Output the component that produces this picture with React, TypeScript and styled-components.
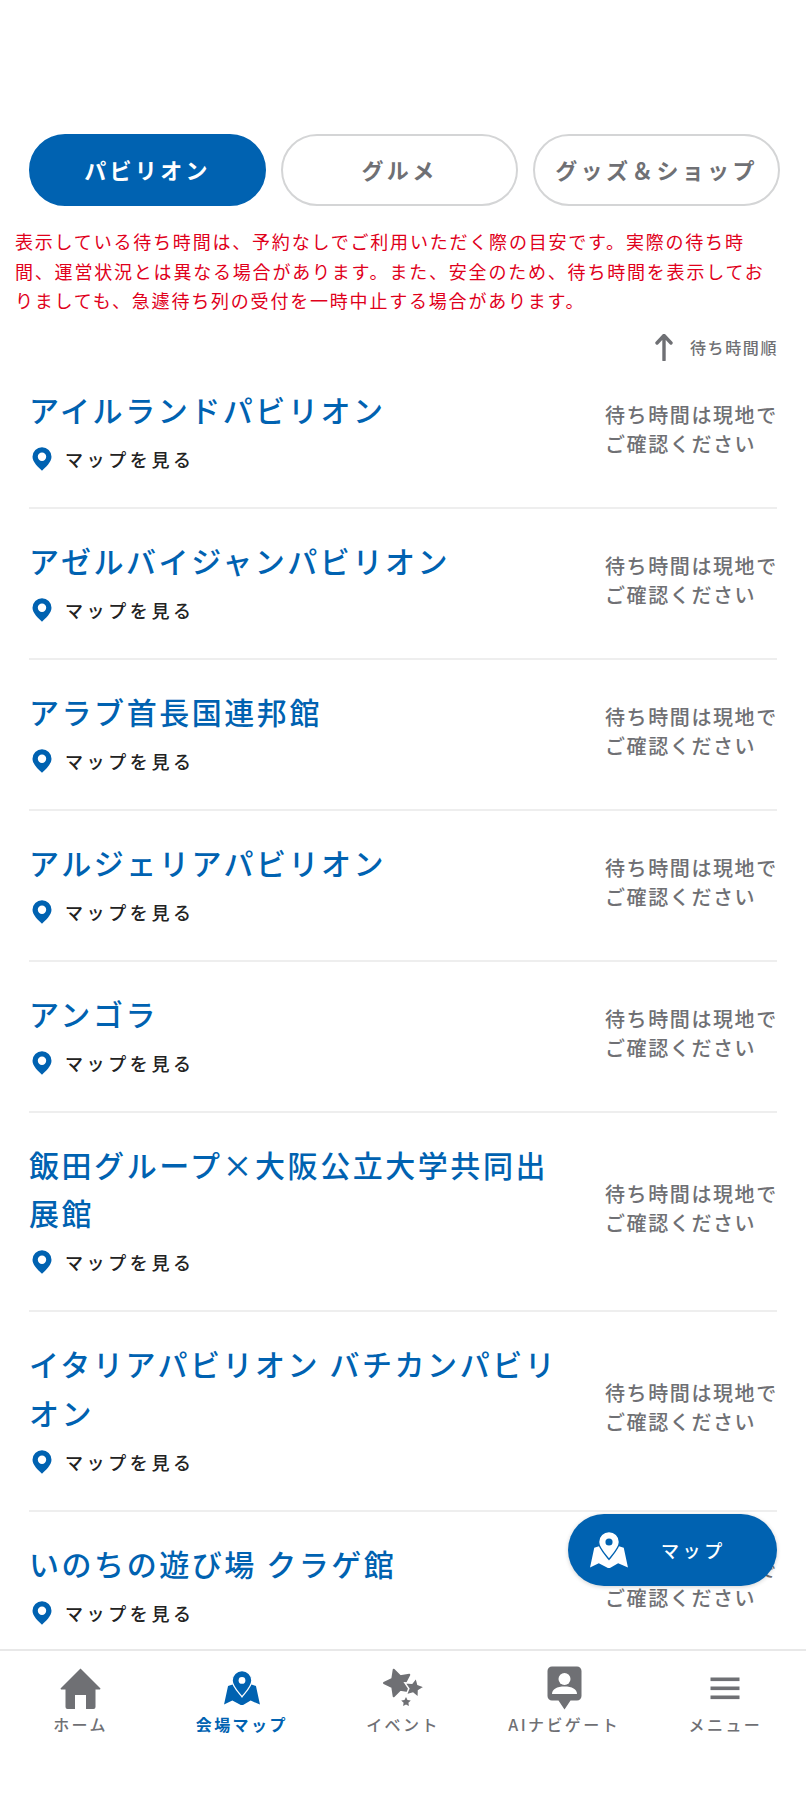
import React from 'react';
import styled, { createGlobalStyle } from 'styled-components';

const BLUE = '#0062b1';
const GRAY = '#6f7074';

const Global = createGlobalStyle`
    html, body {
        margin: 0;
        padding: 0;
        background: #ffffff;
    }
    * {
        box-sizing: border-box;
    }
    body {
        font-family: "Noto Sans CJK JP", "Noto Sans", sans-serif;
    }
`;

const Screen = styled.div`
    position: relative;
    width: 806px;
    height: 1795px;
    display: flex;
    flex-direction: column;
    overflow: hidden;
    background: #ffffff;
`;

const Content = styled.main`
    flex: 1;
    min-height: 0;
    overflow: hidden;
    padding-top: 134px;
`;

const Tabs = styled.div`
    display: flex;
    gap: 15px;
    padding: 0 26px 0 29px;
`;

const Tab = styled.div<{ $active?: boolean; $wide?: boolean }>`
    flex: ${(p) => (p.$wide ? '0 0 247px' : '0 0 237px')};
    height: 72px;
    padding-bottom: 3px;
    display: flex;
    align-items: center;
    justify-content: center;
    border-radius: 36px;
    border: 2px solid ${(p) => (p.$active ? BLUE : '#d4d5d6')};
    background: ${(p) => (p.$active ? BLUE : '#ffffff')};
    color: ${(p) => (p.$active ? '#ffffff' : GRAY)};
    font-size: 22px;
    font-weight: 700;
    letter-spacing: 0.15em;
    white-space: nowrap;
`;

const Notice = styled.p`
    margin: 21px 0 0;
    padding: 0 35px 0 15px;
    color: #e0001b;
    font-size: 18px;
    line-height: 29.5px;
    letter-spacing: 0.1em;
`;

const SortRow = styled.div`
    height: 23px;
    margin-top: 20px;
    margin-bottom: -1px;
    padding-right: 28px;
    display: flex;
    align-items: center;
    justify-content: flex-end;
    gap: 17px;
    color: ${GRAY};
    font-size: 16px;
    font-weight: 500;
    letter-spacing: 0.1em;
`;

const List = styled.ul`
    list-style: none;
    margin: 0;
    padding: 0 29px;
`;

const Row = styled.li`
    display: flex;
    align-items: center;
    justify-content: space-between;
    padding: 27px 0 34px;
    border-bottom: 2px solid #eeeeee;
`;

const RowMain = styled.div`
    width: 535px;
`;

const Title = styled.h2`
    margin: 0;
    color: ${BLUE};
    font-size: 30px;
    font-weight: 500;
    line-height: 48.5px;
    letter-spacing: 0.085em;
`;

const MapLink = styled.a`
    display: flex;
    align-items: center;
    gap: 13px;
    height: 30px;
    margin-top: 10.5px;
    margin-bottom: -1px;
    padding-left: 3px;
    color: #222222;
    font-size: 18px;
    font-weight: 500;
    letter-spacing: 0.2em;
`;

const WaitNote = styled.div`
    width: 172px;
    flex: none;
    color: ${GRAY};
    font-size: 20px;
    font-weight: 500;
    line-height: 29px;
    letter-spacing: 0.08em;
    white-space: nowrap;
`;

const Fab = styled.button`
    position: absolute;
    left: 568px;
    top: 1514px;
    width: 209px;
    height: 72px;
    display: flex;
    align-items: center;
    gap: 33px;
    padding: 0 0 0 22px;
    border: none;
    border-radius: 36px;
    background: ${BLUE};
    color: #ffffff;
    font-family: inherit;
    font-size: 18px;
    font-weight: 500;
    letter-spacing: 0.2em;
    box-shadow: 0 1px 4px rgba(0, 0, 0, 0.18);
`;

const Nav = styled.nav`
    flex: none;
    height: 146px;
    display: grid;
    grid-template-columns: repeat(5, 1fr);
    border-top: 2px solid #e8e8e8;
    background: #ffffff;
`;

const NavItem = styled.div<{ $active?: boolean }>`
    display: flex;
    flex-direction: column;
    align-items: center;
    color: ${(p) => (p.$active ? BLUE : GRAY)};
    font-size: 16px;
    font-weight: ${(p) => (p.$active ? 700 : 500)};
    letter-spacing: 0.15em;
`;

const NavIcon = styled.div`
    height: 46px;
    margin-top: 14px;
    display: flex;
    align-items: center;
    justify-content: center;
`;

const NavLabel = styled.span`
    margin-top: 1px;
    line-height: 24px;
    white-space: nowrap;
`;

const PinIcon = () => (
    <svg width="20" height="24" viewBox="0 0 20 24">
        <path
            fill={BLUE}
            fillRule="evenodd"
            d="M10 0.3a9.5 9.5 0 0 1 9.5 9.5c0 5.4-5.8 10.4-9.500 14C6.300 20.200 0.500 15.200 0.500 9.800A9.500 9.500 0 0 1 10 0.300zM10 5.600a4.200 4.200 0 1 0 0 8.400a4.200 4.200 0 0 0 0-8.400z"
        />
    </svg>
);

const ArrowUp = () => (
    <svg width="18" height="27" viewBox="0 0 18 27">
        <path d="M9 1.5L9 26M2 9L9 1.5L16 9" fill="none" stroke={GRAY} strokeWidth="3.4" strokeLinecap="round" strokeLinejoin="round" />
    </svg>
);

const HomeIcon = () => (
    <svg width="41" height="41" viewBox="0 0 41 41">
        <path
            fill={GRAY}
            d="M20.5 0.5L40.5 20.5L40 21.5H35.5V39a2 2 0 0 1-2 2H26V27H15V41H7.5a2 2 0 0 1-2-2V21.5H1L0.5 20.5z"
        />
    </svg>
);

const MapIcon = ({ color, inner, size }: { color: string; inner: string; size: number }) => (
    <svg width={size} height={size * 0.97} viewBox="0 0 36 35">
        <path
            fill={color}
            d="M4 15L10 13L18 24L26 13L32 15L36 33.7L26.7 29.7L18 34.7L8.3 29.7L0 33.7z"
        />
        <path
            fill={color}
            stroke={inner}
            strokeWidth="1.3"
            d="M18 -0.4a9.9 9.9 0 0 1 9.9 9.9c0 5.5-6.1 11.6-9.9 16.4c-3.8-4.8-9.9-10.900-9.9-16.4A9.9 9.9 0 0 1 18 -0.4z"
        />
        <circle cx="18" cy="9.5" r="3.4" fill={inner} />
    </svg>
);

const star = (cx: number, cy: number, r: number, rot: number) => {
    const pts: string[] = [];
    for (let i = 0; i < 10; i++) {
        const rad = i % 2 === 0 ? r : r * 0.5;
        const a = ((rot + i * 36 - 90) * Math.PI) / 180;
        pts.push(`${(cx + rad * Math.cos(a)).toFixed(1)},${(cy + rad * Math.sin(a)).toFixed(1)}`);
    }
    return pts.join(' ');
};

const StarsIcon = () => (
    <svg width="42" height="40" viewBox="0 0 42 40">
        <polygon fill={GRAY} stroke={GRAY} strokeWidth="2" strokeLinejoin="round" points={star(16, 15, 14, -18)} />
        <polygon fill={GRAY} stroke="#ffffff" strokeWidth="1.5" points={star(32, 20, 10.5, 12)} />
        <polygon fill={GRAY} points={star(24, 34, 5, 0)} />
    </svg>
);

const GuideIcon = () => (
    <svg width="35" height="44" viewBox="0 0 35 44">
        <path
            fill={GRAY}
            d="M5 0.5H30a4.5 4.5 0 0 1 4.5 4.5V30a4.5 4.5 0 0 1-4.5 4.5H23.5L17.5 43.5L11.5 34.5H5A4.5 4.5 0 0 1 0.5 30V5A4.5 4.5 0 0 1 5 0.5z"
        />
        <circle cx="17.5" cy="13" r="6" fill="#ffffff" />
        <path fill="#ffffff" d="M5 28c0-5 5-7.500 12.500-7.500S30 23 30 28z" />
    </svg>
);

const MenuIcon = () => (
    <svg width="30" height="23" viewBox="0 0 30 23">
        <rect x="0.5" y="0.5" width="29" height="3.6" fill={GRAY} />
        <rect x="0.5" y="9.500" width="29" height="3.6" fill={GRAY} />
        <rect x="0.5" y="18.5" width="29" height="3.6" fill={GRAY} />
    </svg>
);

const pavilions = [
    'アイルランドパビリオン',
    'アゼルバイジャンパビリオン',
    'アラブ首長国連邦館',
    'アルジェリアパビリオン',
    'アンゴラ',
    '飯田グループ×大阪公立大学共同出展館',
    'イタリアパビリオン バチカンパビリオン',
    'いのちの遊び場 クラゲ館',
];

const App: React.FC = () => {
    return (
        <Screen>
            <Global />
            <Content>
                <Tabs>
                    <Tab $active>パビリオン</Tab>
                    <Tab>グルメ</Tab>
                    <Tab $wide>グッズ＆ショップ</Tab>
                </Tabs>
                <Notice>
                    表示している待ち時間は、予約なしでご利用いただく際の目安です。実際の待ち時間、運営状況とは異なる場合があります。また、安全のため、待ち時間を表示しておりましても、急遽待ち列の受付を一時中止する場合があります。
                </Notice>
                <SortRow>
                    <ArrowUp />
                    <span>待ち時間順</span>
                </SortRow>
                <List>
                    {pavilions.map((name) => (
                        <Row key={name}>
                            <RowMain>
                                <Title>{name}</Title>
                                <MapLink>
                                    <PinIcon />
                                    マップを見る
                                </MapLink>
                            </RowMain>
                            <WaitNote>
                                待ち時間は現地で
                                <br />
                                ご確認ください
                            </WaitNote>
                        </Row>
                    ))}
                </List>
            </Content>
            <Fab>
                <MapIcon color="#ffffff" inner={BLUE} size={38} />
                マップ
            </Fab>
            <Nav>
                <NavItem>
                    <NavIcon><HomeIcon /></NavIcon>
                    <NavLabel>ホーム</NavLabel>
                </NavItem>
                <NavItem $active>
                    <NavIcon><MapIcon color={BLUE} inner="#ffffff" size={36} /></NavIcon>
                    <NavLabel>会場マップ</NavLabel>
                </NavItem>
                <NavItem>
                    <NavIcon><StarsIcon /></NavIcon>
                    <NavLabel>イベント</NavLabel>
                </NavItem>
                <NavItem>
                    <NavIcon><GuideIcon /></NavIcon>
                    <NavLabel>AIナビゲート</NavLabel>
                </NavItem>
                <NavItem>
                    <NavIcon><MenuIcon /></NavIcon>
                    <NavLabel>メニュー</NavLabel>
                </NavItem>
            </Nav>
        </Screen>
    );
};

export default App;
